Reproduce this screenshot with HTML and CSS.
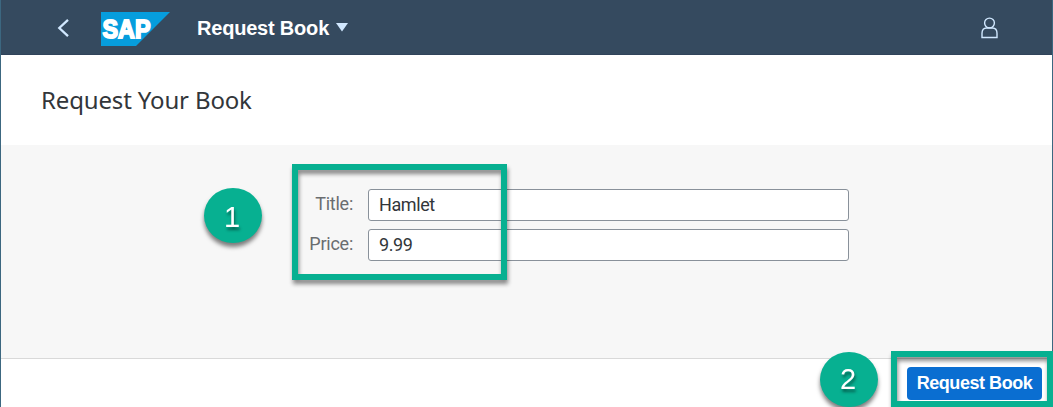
FILE: index.html
```html
<!DOCTYPE html>
<html lang="en">
<head>
<meta charset="utf-8">
<title>Request Book</title>
<link rel="stylesheet" href="styles.css">
</head>
<body>
<div class="app">
  <header class="shell">
    <svg class="back" width="12" height="20" viewBox="0 0 12 20"><path d="M11 1.8 2.3 10l8.7 8.2" fill="none" stroke="#d1e8ff" stroke-width="2.3"/></svg>
    <svg class="logo" width="69" height="34" viewBox="0 0 69 34">
      <path d="M0 0H69L35 34H0Z" fill="#069ddd"/>
      <text class="logo-text" x="1.5" y="26" textLength="48" lengthAdjust="spacingAndGlyphs">SAP</text>
    </svg>
    <span class="app-title">Request Book</span>
    <svg class="caret" width="12" height="9" viewBox="0 0 12 9"><path d="M0 0H12L6 8.5Z" fill="#d1e8ff"/></svg>
    <svg class="user" width="17" height="22" viewBox="0 0 17 22"><g fill="none" stroke="#d1e8ff" stroke-width="1.4"><ellipse cx="8.5" cy="6" rx="4.9" ry="4.9"/><path d="M1 20.5V16.3C1 12.8 2.8 11 5.5 11H11.5C14.2 11 16 12.8 16 16.3V20.5Z"/></g></svg>
  </header>
  <div class="page-head"><h1 class="page-title">Request Your Book</h1></div>
  <main class="form">
    <label class="row"><span class="label">Title:</span><input class="input" value="Hamlet"></label>
    <label class="row"><span class="label">Price:</span><input class="input" value="9.99"></label>
  </main>
  <footer class="footer"><button class="submit">Request Book</button></footer>
</div>
<div class="frame frame-form"></div>
<div class="frame frame-submit"></div>
<div class="badge badge-one">1</div>
<div class="badge badge-two">2</div>
</body>
</html>
```
FILE: styles.css
```css
* { box-sizing: border-box; }
body {
  margin: 0;
  width: 1053px;
  height: 407px;
  overflow: hidden;
  position: relative;
  font-family: "Liberation Sans", Arial, sans-serif;
  color: #32363a;
}
.app {
  height: 407px;
  display: flex;
  flex-direction: column;
  border: solid #3c6780;
  border-width: 0 1px;
  background: #fff;
}
.shell {
  height: 55px;
  flex: none;
  display: flex;
  align-items: center;
  padding: 0 54px 0 56px;
  background: #354a5f;
  border-bottom: 1px solid #30435a;
}
.back { margin: 2px 32px 0 0; }
.logo { margin: 4px 27px 0 0; }
.logo-text {
  font: bold 25px "Liberation Sans", Arial, sans-serif;
  fill: #fff;
  stroke: #fff;
  stroke-width: 1.8px;
}
.app-title {
  width: 139px;
  color: #fff;
  font: 700 20px "Liberation Sans", Arial, sans-serif;
  letter-spacing: -.2px;
  white-space: nowrap;
  margin-top: 2px;
}
.caret { margin-top: 1px; }
.user { margin-left: auto; margin-top: 2px; }
.page-head {
  height: 90px;
  flex: none;
  display: flex;
  align-items: center;
  padding: 0 40px 2px;
}
.page-title {
  margin: 0;
  font: 400 24px "Noto Sans", sans-serif;
  letter-spacing: -.15px;
  white-space: nowrap;
}
.form {
  height: 213px;
  flex: none;
  display: flex;
  flex-direction: column;
  gap: 8px;
  padding: 44px 0 0 291px;
  background: #f7f7f7;
}
.row { display: flex; }
.label {
  width: 61px;
  margin-right: 15px;
  padding-top: 4px;
  color: #6a6d70;
  font: 18px/22px Roboto, sans-serif;
  letter-spacing: -.25px;
  text-align: right;
}
.input {
  width: 481px;
  height: 32px;
  padding: 0 10px 2px;
  border: 1px solid #89919a;
  border-radius: 3px;
  background: #fff;
  color: #32363a;
  font: 18px Roboto, sans-serif;
  letter-spacing: -.4px;
}
.footer {
  flex: 1;
  display: flex;
  justify-content: flex-end;
  align-items: flex-start;
  padding: 8px 10px 0;
  border-top: 1px solid #d9d9d9;
}
.submit {
  width: 135px;
  height: 33px;
  padding: 0;
  border: 0;
  border-radius: 4px;
  background: #0a6ed1;
  color: #fff;
  font: bold 18px "Liberation Sans", Arial, sans-serif;
  letter-spacing: -.45px;
  white-space: nowrap;
}
.frame {
  position: absolute;
  border: 6px solid #07b091;
  filter: drop-shadow(1px 4px 2px rgba(0, 0, 0, .45));
}
.frame-form { left: 292px; top: 164px; width: 215px; height: 116px; }
.frame-submit { left: 891px; top: 351px; width: 162px; height: 56px; }
.badge {
  position: absolute;
  width: 58px;
  height: 55px;
  border-radius: 50%;
  background: #07b091;
  color: #fff;
  font: 29px/59px "Liberation Sans", Arial, sans-serif;
  text-align: center;
  text-indent: -2px;
  text-shadow: 1px 3px 3px rgba(0, 0, 0, .45);
  filter: drop-shadow(0 4px 2px rgba(0, 0, 0, .5));
}
.badge-one { left: 204px; top: 188px; }
.badge-two { left: 820px; top: 352px; line-height: 54px; }
```
